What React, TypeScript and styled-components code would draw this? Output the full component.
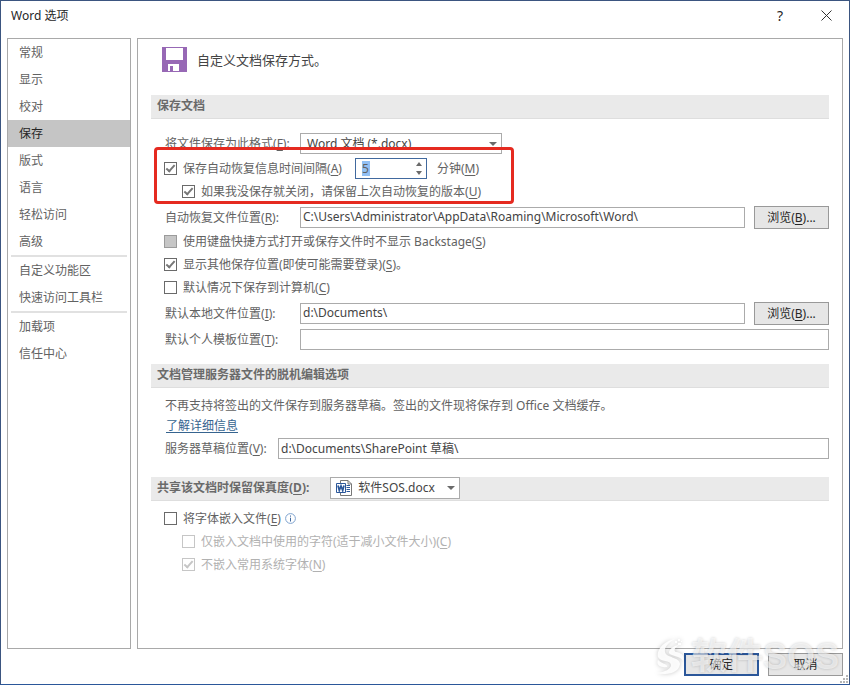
import React, { useId, useState } from 'react';
import styled, { createGlobalStyle, css } from 'styled-components';

const GlobalStyle = createGlobalStyle`
  *, *::before, *::after { box-sizing: border-box; }
  body {
    margin: 0;
    background: #fff;
    color: #626262;
    font-family: 'Noto Sans', 'Noto Sans CJK SC', sans-serif;
    font-size: 12px;
    line-height: 18px;
  }
  button, input, select { font: inherit; color: inherit; margin: 0; }
  u { text-underline-offset: 2px; text-decoration-thickness: 1px; }
`;

const Window = styled.div`
  position: relative;
  display: flex;
  flex-direction: column;
  min-height: 100vh;
  padding: 0 6px;
  border: 1px solid #3b5580;
  border-bottom-color: #2b579a;
`;

const TitleBar = styled.header`
  display: flex;
  align-items: center;
  height: 37px;
  padding: 0 4px 8px;
  color: #262626;
`;

const WindowTitle = styled.h1`
  flex: 1;
  margin: 0;
  font-size: 12px;
  font-weight: 400;
`;

const TitleButton = styled.button`
  display: grid;
  place-items: center;
  width: 46px;
  height: 28px;
  padding: 0;
  border: 0;
  background: transparent;
  font-size: 14px;

  &:last-child { margin-right: -10px; }
`;

const Body = styled.div`
  display: flex;
  flex: 1;
  gap: 6px;
`;

const Sidebar = styled.nav`
  flex: 0 0 124px;
  border: 1px solid #a9a9a9;
`;

const NavItem = styled.button<{ $active?: boolean }>`
  display: block;
  width: 100%;
  height: 27px;
  padding: 0 11px;
  border: 0;
  text-align: left;
  background: ${(p) => (p.$active ? '#c5c5c5' : 'transparent')};
  color: ${(p) => (p.$active ? '#262626' : '#626262')};
`;

const NavDivider = styled.hr`
  height: 2px;
  margin: 0 3px;
  border: 0;
  background: #e1e1e1;
`;

const Panel = styled.main`
  flex: 1;
  min-width: 0;
  padding: 8px 13px;
  border: 1px solid #a9a9a9;
`;

const Intro = styled.div`
  display: flex;
  align-items: center;
  gap: 10px;
  margin: 0 0 23px 11px;
  color: #444;
  font-size: 13px;
`;

const SectionBar = styled.h2`
  display: flex;
  align-items: center;
  gap: 21px;
  height: 24px;
  margin: 0;
  padding: 0 6px 2px;
  border-bottom: 1px solid #dedede;
  background: #eaeaea;
  font-size: 12px;
  font-weight: 700;
  color: #6a6a6a;
`;

const Section = styled.section<{ $top: number; $bottom: number }>`
  padding: ${(p) => p.$top}px 0 ${(p) => p.$bottom}px 13px;
`;

const Row = styled.div<{ $before?: number; $indent?: boolean }>`
  display: flex;
  align-items: center;
  min-height: 23px;
  margin-top: ${(p) => p.$before ?? 0}px;
  padding-left: ${(p) => (p.$indent ? 18 : 0)}px;
`;

const FieldLabel = styled.label<{ $narrow?: boolean }>`
  flex: 0 0 ${(p) => (p.$narrow ? 114 : 136)}px;
  padding-left: 1px;
`;

const Note = styled.p`
  margin: 0;
  padding-left: 1px;
  line-height: 23px;
`;

const MoreLink = styled.a`
  display: block;
  width: max-content;
  margin-left: 2px;
  color: #36648f;
  text-decoration: underline;
  text-underline-offset: 2px;
`;

const TextField = styled.input`
  flex: 1;
  min-width: 0;
  height: 21px;
  padding: 0 2px 2px;
  border: 1px solid #ababab;
  border-radius: 0;
  background: #fff;
  color: #444;
`;

const PushButton = styled.button<{ $primary?: boolean }>`
  flex: 0 0 75px;
  height: 23px;
  padding: 0;
  margin-left: 9px;
  border: ${(p) => (p.$primary ? '2px solid #2b579a' : '1px solid #999')};
  background: #e6e6e6;
  color: #262626;
  line-height: 18px;
`;

const SelectFrame = styled.span<{ $wide?: boolean }>`
  display: flex;
  align-items: center;
  gap: 4px;
  width: ${(p) => (p.$wide ? 202 : 130)}px;
  height: ${(p) => (p.$wide ? 21 : 22)}px;
  padding: 0 4px 0 5px;
  border: 1px solid #ababab;
  background: #fff;
  color: #444;
  font-weight: 400;
`;

const BareSelect = styled.select`
  flex: 1;
  min-width: 0;
  height: 18px;
  padding: 0 1px;
  border: 0;
  outline: 0;
  appearance: none;
  background: transparent;
`;

const Spinner = styled.span`
  display: flex;
  align-items: center;
  justify-content: space-between;
  width: 72px;
  height: 21px;
  margin: 0 10px 0 13px;
  padding: 0 4px 0 6px;
  border: 1px solid #41699e;
`;

const SpinnerValue = styled.input`
  width: 8px;
  height: 15px;
  padding: 0;
  border: 0;
  outline: 0;
  background: #92c0f4;
  line-height: 15px;
`;

const SpinnerArrows = styled.span`
  display: flex;
  flex-direction: column;
  gap: 5px;
`;

const ArrowButton = styled.button`
  display: block;
  height: 4px;
  padding: 0;
  border: 0;
  background: transparent;
  line-height: 0;

  svg { display: block; }
`;

const tick = (colour: string) => css`
  &:checked::after {
    content: '';
    width: 5px;
    height: 9px;
    margin-top: -2px;
    border: solid ${colour};
    border-width: 0 2px 2px 0;
    transform: rotate(42deg);
  }
`;

const CheckInput = styled.input<{ $filled?: boolean }>`
  display: grid;
  place-items: center;
  flex: none;
  width: 13px;
  height: 13px;
  appearance: none;
  border: 1px solid ${(p) => (p.$filled ? '#9b9b9b' : '#6a6a6a')};
  background: ${(p) => (p.$filled ? '#c6c6c6' : '#fff')};
  ${tick('#777')}

  &:disabled {
    border-color: ${(p) => (p.$filled ? '#9b9b9b' : '#c6c6c6')};
    ${tick('#c6c6c6')}
  }
`;

const CheckLabel = styled.label<{ $muted?: boolean }>`
  padding-left: 6px;
  color: ${(p) => (p.$muted ? '#b1b1b1' : 'inherit')};
`;

const InfoButton = styled.button`
  display: grid;
  margin-left: 4px;
  padding: 0;
  border: 0;
  background: transparent;
`;

const HighlightGroup = styled.div`
  position: relative;
  margin-top: 2px;
`;

const HighlightFrame = styled.span`
  position: absolute;
  top: -10px;
  bottom: -1px;
  left: -10px;
  width: 360px;
  border: 3px solid #e52a20;
  border-radius: 4px;
  pointer-events: none;
`;

const Footer = styled.footer`
  display: flex;
  justify-content: flex-end;
  padding: 4px 0 8px;
`;

const Watermark = styled.div`
  position: absolute;
  right: 10px;
  bottom: 5px;
  display: flex;
  align-items: center;
  gap: 4px;
  color: rgba(255, 255, 255, 0.6);
  font-family: 'Liberation Sans', 'Noto Sans CJK SC', sans-serif;
  font-size: 36px;
  font-weight: 700;
  line-height: 44px;
  text-shadow: 0 0 3px rgba(0, 0, 0, 0.2);
  pointer-events: none;

  svg { filter: drop-shadow(0 0 2px rgba(0, 0, 0, 0.25)); }
`;

const Grip = styled.svg`
  position: absolute;
  right: 1px;
  bottom: 1px;
`;

const Caret = () => (
  <svg width="8" height="4" viewBox="0 0 8 4" aria-hidden="true">
    <path d="M0 0h8L4 4z" fill="#6a6a6a" />
  </svg>
);

const DiskIcon = () => (
  <svg width="25" height="25" viewBox="0 0 25 25" aria-hidden="true">
    <path d="M0 0h25v25H0z" fill="#9768b5" />
    <path d="M4 1h17v12H4zM6 17h11v7H9v-5H8v5H6z" fill="#fff" />
    <path d="M8 19h3v5H8z" fill="#9768b5" />
  </svg>
);

const WordIcon = () => (
  <svg width="17" height="16" viewBox="0 0 17 16" aria-hidden="true">
    <path d="M4.500 3V.5h7.500l3.500 3.500v11.500h-11V12" fill="#fff" stroke="#777" />
    <path d="M12 .5V4h3.500" fill="none" stroke="#777" />
    <path d="M10.500 5.500H14M10.500 7.500H14M10.500 9.500H14M10.500 11.500H14" stroke="#2b579a" />
    <path d="M.5 3.500h9v9h-9z" fill="#fff" stroke="#2b579a" />
    <path d="M2 5.500l1.300 5L5 6l1.700 4.500 1.300-5" fill="none" stroke="#2b579a" strokeWidth="1.700" />
  </svg>
);

const InfoIcon = () => (
  <svg width="11" height="11" viewBox="0 0 11 11" aria-hidden="true">
    <circle cx="5.500" cy="5.500" r="4.900" fill="#fff" stroke="#7fa3cf" />
    <path d="M5.500 2.500v1.200M5.500 4.700v3.800" stroke="#41699e" />
  </svg>
);

const CloseIcon = () => (
  <svg width="11" height="11" viewBox="0 0 11 11" aria-hidden="true">
    <path d="M.5.5l10 10M10.500.5l-10 10" stroke="#333" />
  </svg>
);

const SwirlLogo = () => (
  <svg width="32" height="38" viewBox="0 0 32 38" aria-hidden="true">
    <path
      d="M20 1C9 3 1 12 3 19c2 5 13 3 13 8 0 4-6 7-14 8 12 3 22-1 23-9 0-7-14-6-15-12-1-5 4-10 10-13z"
      fill="rgba(255,255,255,.9)"
    />
    <path
      d="M24 7c-6 1-10 4-10 8 1 3 12 3 14 8 2-5-1-8-7-9-3-1-1-5 3-7zM3 22c-2 4 1 8 9 7 1-3-5-3-9-7z"
      fill="rgba(255,255,255,.9)"
    />
    <path d="M20 3h2v2h-2zM23 1h2v2h-2zM23 5h3v2h-3zM26 3h1v1h-1z" fill="#fff" />
  </svg>
);

const NAV_GROUPS = [
  ['常规', '显示', '校对', '保存', '版式', '语言', '轻松访问', '高级'],
  ['自定义功能区', '快速访问工具栏'],
  ['加载项', '信任中心'],
];

const Key = ({ k }: { k: string }) => (
  <>
    (<u>{k}</u>)
  </>
);

interface CheckProps {
  children: React.ReactNode;
  checked?: boolean;
  disabled?: boolean;
  filled?: boolean;
}

function Check({ children, checked, disabled, filled }: CheckProps) {
  const id = useId();
  return (
    <>
      <CheckInput id={id} type="checkbox" defaultChecked={checked} disabled={disabled} $filled={filled} />
      <CheckLabel htmlFor={id} $muted={disabled && !filled}>
        {children}
      </CheckLabel>
    </>
  );
}

interface PathFieldProps {
  label: string;
  accessKey: string;
  value?: string;
  browse?: boolean;
  narrow?: boolean;
  before?: number;
}

function PathField({ label, accessKey, value = '', browse, narrow, before }: PathFieldProps) {
  const id = useId();
  return (
    <Row $before={before}>
      <FieldLabel htmlFor={id} $narrow={narrow}>
        {label}
        <Key k={accessKey} />:
      </FieldLabel>
      <TextField id={id} type="text" defaultValue={value} />
      {browse && (
        <PushButton type="button">
          浏览
          <Key k="B" />
          ...
        </PushButton>
      )}
    </Row>
  );
}

export default function App() {
  const [page, setPage] = useState('保存');
  const [minutes, setMinutes] = useState(5);

  return (
    <>
      <GlobalStyle />
      <Window>
        <TitleBar>
          <WindowTitle>Word 选项</WindowTitle>
          <TitleButton type="button" aria-label="帮助">?</TitleButton>
          <TitleButton type="button" aria-label="关闭">
            <CloseIcon />
          </TitleButton>
        </TitleBar>

        <Body>
          <Sidebar>
            {NAV_GROUPS.map((group, i) => (
              <React.Fragment key={group[0]}>
                {i > 0 && <NavDivider />}
                {group.map((name) => (
                  <NavItem key={name} type="button" $active={name === page} onClick={() => setPage(name)}>
                    {name}
                  </NavItem>
                ))}
              </React.Fragment>
            ))}
          </Sidebar>

          <Panel>
            <Intro>
              <DiskIcon />
              自定义文档保存方式。
            </Intro>

            <SectionBar>保存文档</SectionBar>
            <Section $top={13} $bottom={13}>
              <Row>
                <FieldLabel htmlFor="format">
                  将文件保存为此格式
                  <Key k="F" />:
                </FieldLabel>
                <SelectFrame $wide>
                  <BareSelect id="format">
                    <option>Word 文档 (*.docx)</option>
                  </BareSelect>
                  <Caret />
                </SelectFrame>
              </Row>
              <HighlightGroup>
                <Row>
                  <Check checked>
                    保存自动恢复信息时间间隔
                    <Key k="A" />
                  </Check>
                  <Spinner>
                    <SpinnerValue
                      id="minutes"
                      type="text"
                      inputMode="numeric"
                      value={minutes}
                      onChange={(e) => setMinutes(Number(e.target.value) || 0)}
                    />
                    <SpinnerArrows>
                      <ArrowButton type="button" aria-label="增加" onClick={() => setMinutes(minutes + 1)}>
                        <svg width="6" height="4" viewBox="0 0 6 4">
                          <path d="M0 4h6L3 0z" fill="#6a6a6a" />
                        </svg>
                      </ArrowButton>
                      <ArrowButton type="button" aria-label="减少" onClick={() => setMinutes(Math.max(1, minutes - 1))}>
                        <svg width="6" height="4" viewBox="0 0 6 4">
                          <path d="M0 0h6L3 4z" fill="#6a6a6a" />
                        </svg>
                      </ArrowButton>
                    </SpinnerArrows>
                  </Spinner>
                  <label htmlFor="minutes">
                    分钟
                    <Key k="M" />
                  </label>
                </Row>
                <Row $indent>
                  <Check checked>
                    如果我没保存就关闭，请保留上次自动恢复的版本
                    <Key k="U" />
                  </Check>
                </Row>
                <HighlightFrame />
              </HighlightGroup>
              <PathField
                label="自动恢复文件位置"
                accessKey="R"
                value={'C:\\Users\\Administrator\\AppData\\Roaming\\Microsoft\\Word\\'}
                browse
                before={3}
              />
              <Row $before={1}>
                <Check filled>
                  使用键盘快捷方式打开或保存文件时不显示 Backstage
                  <Key k="S" />
                </Check>
              </Row>
              <Row>
                <Check checked>
                  显示其他保存位置(即使可能需要登录)
                  <Key k="S" />。
                </Check>
              </Row>
              <Row>
                <Check>
                  默认情况下保存到计算机
                  <Key k="C" />
                </Check>
              </Row>
              <PathField label="默认本地文件位置" accessKey="I" value={'d:\\Documents\\'} browse before={3} />
              <PathField label="默认个人模板位置" accessKey="T" before={3} />
            </Section>

            <SectionBar>文档管理服务器文件的脱机编辑选项</SectionBar>
            <Section $top={6} $bottom={17}>
              <Note>不再支持将签出的文件保存到服务器草稿。签出的文件现将保存到 Office 文档缓存。</Note>
              <MoreLink href="#details">了解详细信息</MoreLink>
              <PathField
                label="服务器草稿位置"
                accessKey="V"
                value={'d:\\Documents\\SharePoint 草稿\\'}
                narrow
                before={2}
              />
            </Section>

            <SectionBar>
              <label htmlFor="fidelity">
                共享该文档时保留保真度
                <Key k="D" />:
              </label>
              <SelectFrame>
                <WordIcon />
                <BareSelect id="fidelity">
                  <option>软件SOS.docx</option>
                </BareSelect>
                <Caret />
              </SelectFrame>
            </SectionBar>
            <Section $top={6} $bottom={0}>
              <Row>
                <Check>
                  将字体嵌入文件
                  <Key k="E" />
                </Check>
                <InfoButton type="button" aria-label="信息">
                  <InfoIcon />
                </InfoButton>
              </Row>
              <Row $indent>
                <Check disabled>
                  仅嵌入文档中使用的字符(适于减小文件大小)
                  <Key k="C" />
                </Check>
              </Row>
              <Row $indent>
                <Check checked disabled>
                  不嵌入常用系统字体
                  <Key k="N" />
                </Check>
              </Row>
            </Section>
          </Panel>
        </Body>

        <Footer>
          <PushButton type="button" $primary>确定</PushButton>
          <PushButton type="button">取消</PushButton>
        </Footer>

        <Watermark>
          <SwirlLogo />
          软件SOS
        </Watermark>
        <Grip width="8" height="8" viewBox="0 0 8 8" aria-hidden="true">
          <path d="M6 0h2v2H6zM3 3h2v2H3zM6 3h2v2H6zM0 6h2v2H0zM3 6h2v2H3zM6 6h2v2H6z" fill="#b5b5b5" />
        </Grip>
      </Window>
    </>
  );
}
